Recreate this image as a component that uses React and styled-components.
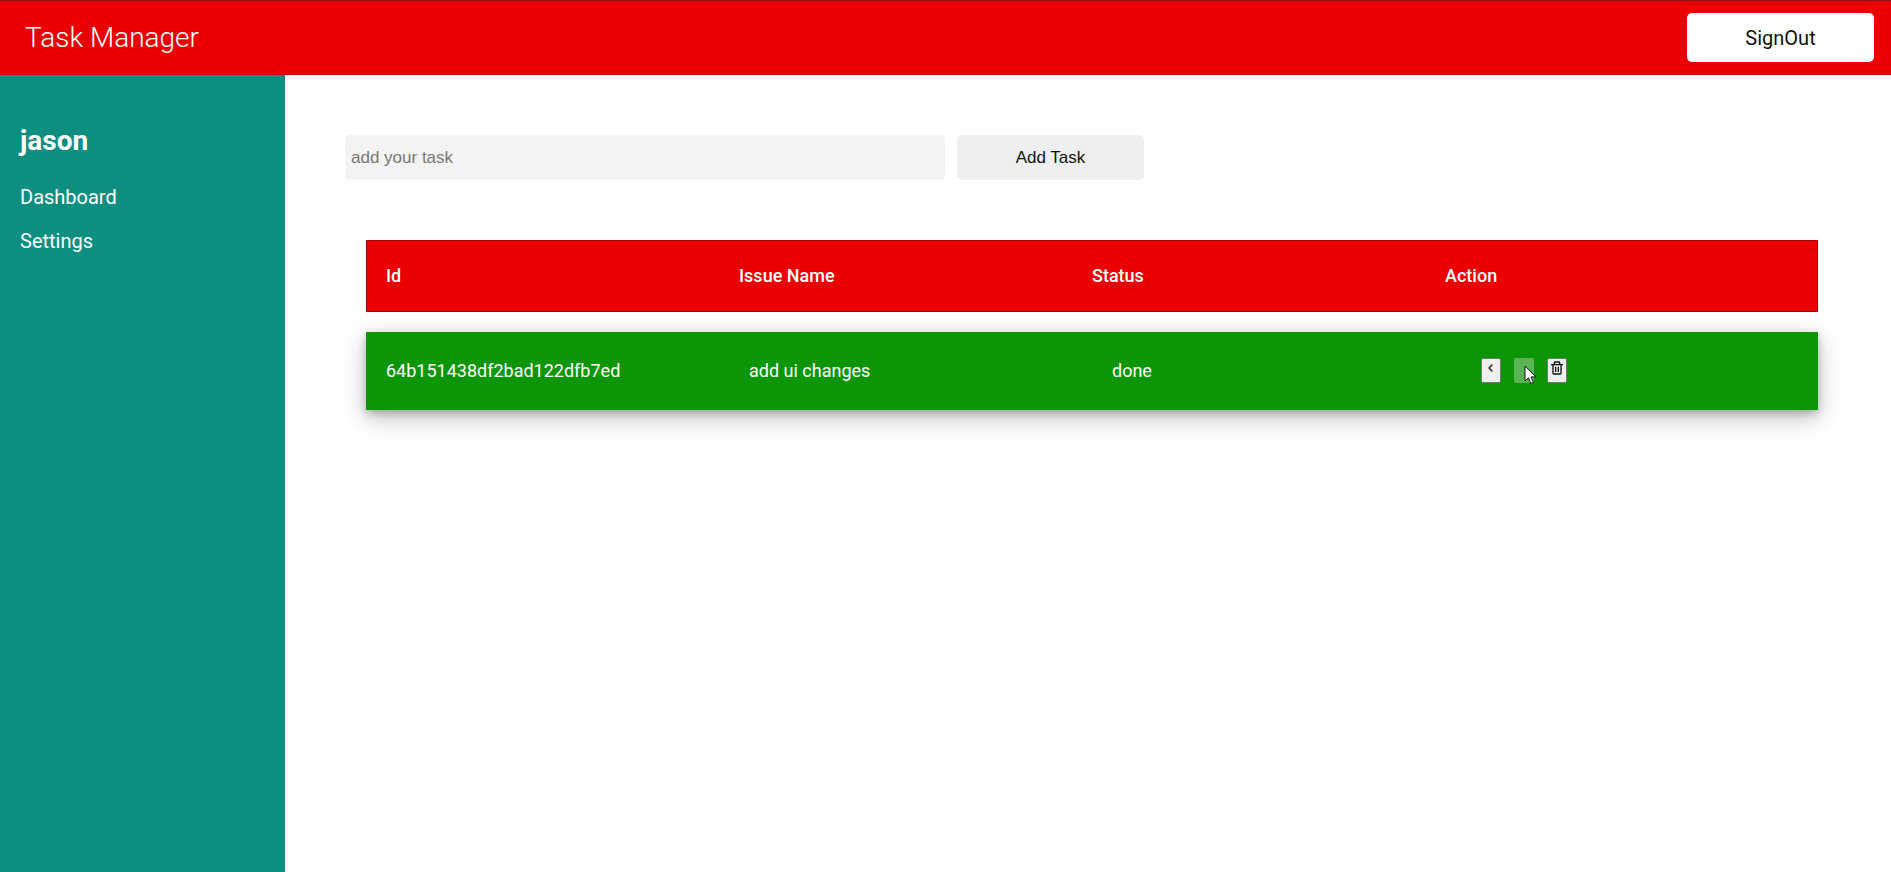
import React from "react";
import styled, { createGlobalStyle } from "styled-components";
import { BiChevronLeft, BiChevronRight, BiTrash } from "react-icons/bi";

const GlobalStyle = createGlobalStyle`
  *, *::before, *::after { box-sizing: border-box; }
  body {
    margin: 0;
    background: #fff;
    font-family: Roboto, "Liberation Sans", sans-serif;
  }
`;

const Page = styled.div`
  display: flex;
  flex-direction: column;
  min-height: 100vh;
`;

const Header = styled.header`
  display: flex;
  align-items: center;
  justify-content: space-between;
  height: 75px;
  padding: 0 17px 0 25px;
  background: #ea0000;
  border-top: 1px solid #8c1022;
  border-bottom: 1px solid #cc0006;
`;

const Brand = styled.h1`
  margin: 0;
  color: #fff;
  font-size: 28px;
  font-weight: 300;
`;

const Button = styled.button`
  width: 187px;
  border: none;
  border-radius: 5px;
  color: #111;
  cursor: pointer;
`;

const SignOutButton = styled(Button)`
  height: 49px;
  background: #fff;
  font-family: Roboto, sans-serif;
  font-size: 20px;
`;

const Body = styled.div`
  display: flex;
  flex: 1;
`;

const Sidebar = styled.aside`
  flex: 0 0 285px;
  padding: 48px 20px;
  background: #0d8e80;
  color: #fff;
`;

const UserName = styled.h2`
  margin: 0 0 26px;
  font-size: 28px;
  line-height: 36px;
  font-weight: 700;
`;

const Nav = styled.nav`
  display: flex;
  flex-direction: column;
  gap: 20px;
`;

const NavLink = styled.a`
  color: #fff;
  font-size: 20px;
  line-height: 24px;
  text-decoration: none;
`;

const Main = styled.main`
  flex: 1;
  min-width: 0;
  padding: 60px 73px 60px 60px;
`;

const TaskForm = styled.form`
  display: flex;
  gap: 12px;
`;

const TaskInput = styled.input`
  flex: 0 1 600px;
  min-width: 0;
  height: 45px;
  padding: 0 6px;
  border: none;
  border-radius: 5px;
  background: #f3f3f3;
  font-family: "Liberation Sans", sans-serif;
  font-size: 17px;
  &::placeholder { color: #777; }
`;

const AddButton = styled(Button)`
  height: 45px;
  background: #efefef;
  font-family: "Liberation Sans", sans-serif;
  font-size: 17px;
`;

const Table = styled.table`
  display: block;
  margin: 60px 0 0 21px;
  color: #fff;
  font-size: 18px;
  line-height: 22px;
  text-align: left;
`;

const TableHead = styled.thead`
  display: block;
`;

const TableBody = styled.tbody`
  display: block;
`;

const HeadRow = styled.tr`
  display: grid;
  grid-template-columns: repeat(4, 1fr);
  align-items: center;
  height: 72px;
  padding: 0 19px;
  background: #ea0000;
  border: 1px solid #a8000c;
`;

const HeadCell = styled.th`
  padding: 0;
  font-weight: 500;
`;

const TaskRow = styled.tr`
  display: grid;
  grid-template-columns: repeat(4, 1fr);
  align-items: center;
  height: 78px;
  margin-top: 20px;
  background: #0c9606;
  box-shadow: 0 8px 24px rgba(0, 0, 0, 0.24), 0 3px 8px rgba(0, 0, 0, 0.24);
`;

const Cell = styled.td`
  padding: 0 0 0 20px;
`;

const Actions = styled.div`
  display: flex;
  gap: 13px;
  padding: 0 0 2px 6px;
`;

const IconButton = styled.button`
  position: relative;
  display: flex;
  align-items: flex-start;
  justify-content: center;
  width: 20px;
  height: 25px;
  padding: 1px 0 0;
  border: 1px solid #777;
  border-radius: 2px;
  background: #efefef;
  color: #111;
  font-size: 16px;

  &:disabled {
    border-color: transparent;
    background: rgba(239, 239, 239, 0.35);
    color: transparent;
  }
`;

const Pointer = styled.svg`
  position: absolute;
  top: 6px;
  left: 9px;
  width: 13px;
  height: 20px;
`;

const tasks = [
  { id: "64b151438df2bad122dfb7ed", name: "add ui changes", status: "done" },
];

export default function App() {
  return (
    <Page>
      <GlobalStyle />
      <Header>
        <Brand>Task Manager</Brand>
        <SignOutButton type="button">SignOut</SignOutButton>
      </Header>
      <Body>
        <Sidebar>
          <UserName>jason</UserName>
          <Nav>
            <NavLink href="#dashboard">Dashboard</NavLink>
            <NavLink href="#settings">Settings</NavLink>
          </Nav>
        </Sidebar>
        <Main>
          <TaskForm onSubmit={(event) => event.preventDefault()}>
            <TaskInput type="text" placeholder="add your task" aria-label="add your task" />
            <AddButton type="submit">Add Task</AddButton>
          </TaskForm>
          <Table>
            <TableHead>
              <HeadRow>
                {["Id", "Issue Name", "Status", "Action"].map((title) => (
                  <HeadCell key={title} scope="col">{title}</HeadCell>
                ))}
              </HeadRow>
            </TableHead>
            <TableBody>
              {tasks.map((task) => (
                <TaskRow key={task.id}>
                  <Cell>{task.id}</Cell>
                  <Cell>{task.name}</Cell>
                  <Cell>{task.status}</Cell>
                  <Cell>
                    <Actions>
                      <IconButton type="button" aria-label="Previous status">
                        <BiChevronLeft />
                      </IconButton>
                      <IconButton type="button" aria-label="Next status" disabled>
                        <BiChevronRight />
                        <Pointer viewBox="0 0 13 20" aria-hidden="true">
                          <path
                            d="M1 1v15l3.400-3.200 2.400 5.700 2.600-1.100-2.400-5.500H12z"
                            fill="#fff"
                            stroke="#111"
                          />
                        </Pointer>
                      </IconButton>
                      <IconButton type="button" aria-label="Delete task">
                        <BiTrash />
                      </IconButton>
                    </Actions>
                  </Cell>
                </TaskRow>
              ))}
            </TableBody>
          </Table>
        </Main>
      </Body>
    </Page>
  );
}
